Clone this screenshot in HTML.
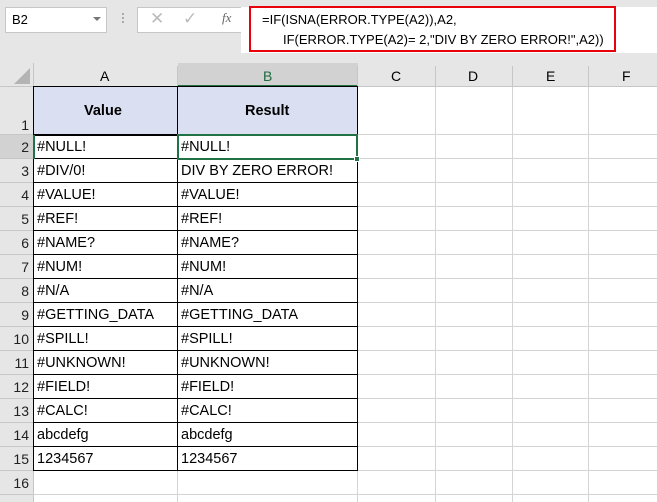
<!DOCTYPE html>
<html><head><style>
*{margin:0;padding:0;box-sizing:border-box}
body{width:657px;height:502px;background:#e6e6e6;position:relative;overflow:hidden;font-family:"Liberation Sans",sans-serif;color:#000}
.a{position:absolute}
.t{position:absolute;font-size:14px;white-space:nowrap}
.vl{position:absolute;width:1px;background:#d4d4d4}
#g{position:absolute;left:0;top:135px;width:657px}
.r{position:relative;height:24px;border-bottom:1px solid #d4d4d4}
.r .n{position:absolute;left:0;top:0;width:33px;height:24px;background:#e6e6e6;border-bottom:1px solid #c6c6c6;text-align:right;padding-right:4px;font-size:14px;line-height:24px;color:#222}
.r .c1{position:absolute;left:33px;top:-1px;width:145px;height:25px;border:1px solid #000;font-size:14.5px;padding:4px 0 0 3px;white-space:nowrap}
.r .c2{position:absolute;left:177px;top:-1px;width:181px;height:25px;border:1px solid #000;font-size:14.5px;padding:4px 0 0 3px;white-space:nowrap}
</style></head><body>
<div class="a" style="left:5px;top:7px;width:102px;height:26px;background:#fff;border:1px solid #c6c6c6"></div>
<div class="t" style="left:12px;top:12px;font-size:13px">B2</div>
<div class="a" style="left:93px;top:17px;width:0;height:0;border-left:4px solid transparent;border-right:4px solid transparent;border-top:4px solid #777"></div>
<div class="a" style="left:122px;top:13px;width:2px;height:2px;background:#aaa;box-shadow:0 4px #aaa,0 8px #aaa"></div>
<div class="a" style="left:137px;top:7px;width:105px;height:26px;background:#fff;border:1px solid #c6c6c6"></div>
<div class="t" style="left:150px;top:9px;font-size:17px;color:#bbb">✕</div>
<div class="t" style="left:183px;top:9px;font-size:17px;color:#bbb">✓</div>
<div class="t" style="left:222px;top:10px;font-size:13px;color:#666;font-style:italic;font-family:'Liberation Serif',serif">fx</div>
<div class="a" style="left:241px;top:7px;width:416px;height:46px;background:#fff"></div>
<div class="a" style="left:249px;top:6px;width:367px;height:46px;border:2px solid #e8000b"></div>
<div class="t" style="left:262px;top:12px;font-size:13px">=IF(ISNA(ERROR.TYPE(A2)),A2,</div>
<div class="t" style="left:283px;top:32px;font-size:13px">IF(ERROR.TYPE(A2)= 2,"DIV BY ZERO ERROR!",A2))</div>

<div class="a" style="left:34px;top:87px;width:623px;height:415px;background:#fff"></div>
<div class="a" style="left:0;top:63px;width:657px;height:24px;background:#e6e6e6;border-bottom:1px solid #c6c6c6"></div>
<div class="a" style="left:178px;top:63px;width:180px;height:24px;background:#d2d2d2;border-bottom:2px solid #217346"></div>
<div class="a" style="left:14px;top:68px;width:0;height:0;border-left:16px solid transparent;border-bottom:16px solid #b4b4b4"></div>
<div class="vl" style="left:33px;top:63px;height:439px;background:#c6c6c6"></div>
<div class="vl" style="left:177px;top:66px;height:20px;background:#c6c6c6"></div>
<div class="vl" style="left:357px;top:66px;height:20px;background:#c6c6c6"></div>
<div class="vl" style="left:435px;top:66px;height:20px;background:#c6c6c6"></div>
<div class="vl" style="left:512px;top:66px;height:20px;background:#c6c6c6"></div>
<div class="vl" style="left:588px;top:66px;height:20px;background:#c6c6c6"></div>
<div class="t" style="left:100px;top:68px">A</div>
<div class="t" style="left:263px;top:68px;color:#1e6b3e">B</div>
<div class="t" style="left:391px;top:68px">C</div>
<div class="t" style="left:468px;top:68px">D</div>
<div class="t" style="left:546px;top:68px">E</div>
<div class="t" style="left:622px;top:68px">F</div>

<div class="vl" style="left:435px;top:87px;height:415px"></div>
<div class="vl" style="left:512px;top:87px;height:415px"></div>
<div class="vl" style="left:588px;top:87px;height:415px"></div>
<div class="vl" style="left:177px;top:471px;height:31px"></div>
<div class="vl" style="left:357px;top:471px;height:31px"></div>

<div class="a" style="left:0;top:87px;width:33px;height:48px;background:#e6e6e6;border-bottom:1px solid #c6c6c6;text-align:right;padding-right:4px;font-size:14px;line-height:76px;color:#222">1</div>
<div class="a" style="left:358px;top:134px;width:299px;height:1px;background:#d4d4d4"></div>
<div class="a" style="left:33px;top:86px;width:325px;height:50px;background:#dae0f2;border:1px solid #000"></div>
<div class="a" style="left:177px;top:86px;width:1px;height:50px;background:#000"></div>
<div class="t" style="left:84px;top:103px;font-weight:bold;font-size:14.5px">Value</div>
<div class="t" style="left:245px;top:103px;font-weight:bold;font-size:14.5px">Result</div>

<div id="g">
<div class="r"><div class="n" style="background:#d2d2d2">2</div><div class="c1">#NULL!</div><div class="c2">#NULL!</div></div>
<div class="r"><div class="n">3</div><div class="c1">#DIV/0!</div><div class="c2">DIV BY ZERO ERROR!</div></div>
<div class="r"><div class="n">4</div><div class="c1">#VALUE!</div><div class="c2">#VALUE!</div></div>
<div class="r"><div class="n">5</div><div class="c1">#REF!</div><div class="c2">#REF!</div></div>
<div class="r"><div class="n">6</div><div class="c1">#NAME?</div><div class="c2">#NAME?</div></div>
<div class="r"><div class="n">7</div><div class="c1">#NUM!</div><div class="c2">#NUM!</div></div>
<div class="r"><div class="n">8</div><div class="c1">#N/A</div><div class="c2">#N/A</div></div>
<div class="r"><div class="n">9</div><div class="c1">#GETTING_DATA</div><div class="c2">#GETTING_DATA</div></div>
<div class="r"><div class="n">10</div><div class="c1">#SPILL!</div><div class="c2">#SPILL!</div></div>
<div class="r"><div class="n">11</div><div class="c1">#UNKNOWN!</div><div class="c2">#UNKNOWN!</div></div>
<div class="r"><div class="n">12</div><div class="c1">#FIELD!</div><div class="c2">#FIELD!</div></div>
<div class="r"><div class="n">13</div><div class="c1">#CALC!</div><div class="c2">#CALC!</div></div>
<div class="r"><div class="n">14</div><div class="c1">abcdefg</div><div class="c2">abcdefg</div></div>
<div class="r"><div class="n">15</div><div class="c1">1234567</div><div class="c2">1234567</div></div>
<div class="r"><div class="n">16</div></div>
</div>

<div class="a" style="left:33px;top:135px;width:2px;height:24px;background:#217346"></div>
<div class="a" style="left:177px;top:134px;width:181px;height:26px;border:2px solid #217346"></div>
<div class="a" style="left:354px;top:156px;width:6px;height:6px;background:#217346;border:1px solid #fff"></div>
</body></html>
